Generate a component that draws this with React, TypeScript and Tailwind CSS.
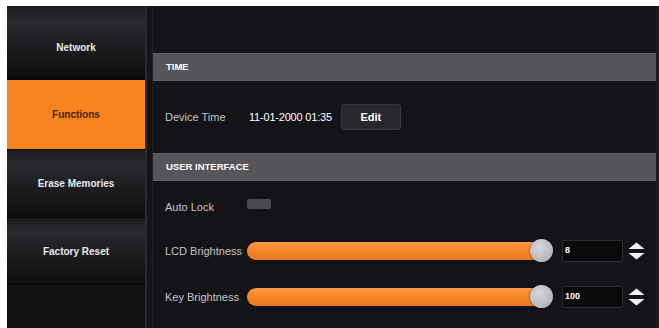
import React from "react";

const font = { fontFamily: '"Liberation Sans", Arial, sans-serif' };

function SideButton({ label, active, h, extra = "" }: { label: string; active?: boolean; h: string; extra?: string }) {
  if (active) {
    return (
      <div className={`${h} flex items-center justify-center bg-[#f7841f] text-[10px] font-bold text-[#4a2206] border-y border-[#0a0a0a]`}>
        {label}
      </div>
    );
  }
  return (
    <div
      className={`${h} ${extra} flex items-center justify-center bg-gradient-to-b from-[#1a1a1d] via-[#2a2a2e] via-20% to-[#0e0e10] text-[10px] font-bold text-[#e8e8e8] border-b border-[#050505]`}
    >
      {label}
    </div>
  );
}

function SectionHeader({ title }: { title: string }) {
  return (
    <div className="h-[28px] bg-[#55555a] border-y border-[#606066] flex items-center pl-[13px] text-[9.5px] font-bold text-white">
      {title}
    </div>
  );
}

function Spinner() {
  return (
    <svg width="19" height="20" viewBox="0 0 19 20" className="ml-[4px]">
      <polygon points="1.5,8 9.5,1.5 17.5,8" fill="#f2f2f2" />
      <polygon points="1.5,12 9.5,18.5 17.5,12" fill="#f2f2f2" />
    </svg>
  );
}

function SliderRow({ label, value }: { label: string; value: string }) {
  return (
    <div className="flex items-center h-[24px]">
      <div className="w-[82px] text-[11px] text-[#c4c4c6]">{label}</div>
      <div className="relative w-[307px] h-[18px]">
        <div className="absolute left-0 top-0 h-[18px] w-[298px] rounded-full bg-gradient-to-b from-[#fb9a45] via-[#f58426] to-[#e87a22]" />
        <div className="absolute left-[283px] top-[-3px] w-[23px] h-[23px] rounded-full bg-[radial-gradient(circle_at_40%_35%,#d4d6d9,#a9abaf)] shadow-[0_0_2px_rgba(0,0,0,0.8)]" />
      </div>
      <div className="ml-[8px] w-[61px] h-[22px] bg-[#0a0a0c] border border-[#2e2e32] rounded-[2px] flex items-center pl-[2px] text-[9px] font-bold text-white">
        {value}
      </div>
      <Spinner />
    </div>
  );
}

export default function App() {
  return (
    <div className="w-[659px] h-[328px] bg-white pt-[6px] pl-[7px] flex overflow-hidden" style={font}>
      <div className="w-[138px] h-full bg-[#121214] flex flex-col">
        <SideButton label="Network" h="h-[73px]" extra="pt-[10px]" />
        <SideButton label="Functions" active h="h-[71px]" />
        <SideButton label="Erase Memories" h="h-[68px]" />
        <SideButton label="Factory Reset" h="h-[67px]" />
      </div>
      <div className="w-[2px] h-full bg-[#2c2c30]" />
      <div className="w-[6px] h-full bg-[#151518] border-r border-[#222226]" />
      <div className="flex-1 h-full bg-[#141418] pt-[47px]">
        <SectionHeader title="TIME" />
        <div className="h-[72px] flex items-center pl-[12px]">
          <div className="w-[84px] text-[11px] text-[#c4c4c6]">Device Time</div>
          <div className="text-[11px] text-white tracking-[-0.2px]">11-01-2000 01:35</div>
          <div className="ml-[9px] w-[60px] h-[26px] rounded-[3px] bg-[#28282c] border border-[#38383c] flex items-center justify-center text-[11px] font-bold text-white">
            Edit
          </div>
        </div>
        <SectionHeader title="USER INTERFACE" />
        <div className="pl-[12px] pt-[14px] flex flex-col">
          <div className="flex items-center h-[24px]">
            <div className="w-[82px] text-[11px] text-[#c4c4c6]">Auto Lock</div>
            <div className="w-[24px] h-[10px] rounded-[2px] bg-[#4a4a4e] -mt-[6px]" />
          </div>
          <div className="h-[20px]" />
          <SliderRow label="LCD Brightness" value="8" />
          <div className="h-[22px]" />
          <SliderRow label="Key Brightness" value="100" />
        </div>
      </div>
      <div className="w-[3px] h-full bg-[#1c1c20]" />
    </div>
  );
}
